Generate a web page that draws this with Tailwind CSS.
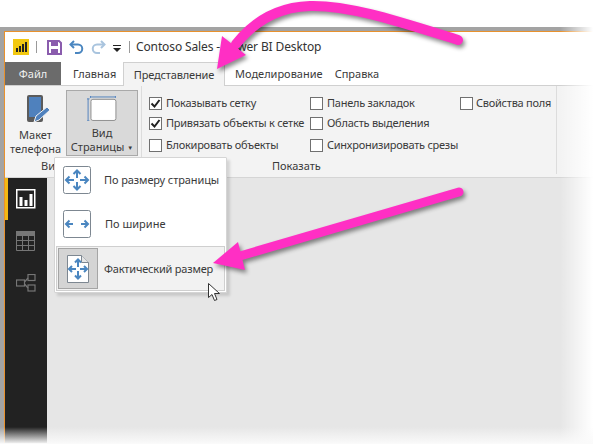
<!DOCTYPE html>
<html><head><meta charset="utf-8"><script src="https://cdn.jsdelivr.net/npm/@tailwindcss/browser@4"></script></head>
<body class="bg-white">
<div class="relative w-[593px] h-[447px] overflow-hidden bg-white font-['Noto_Sans',sans-serif] text-[11px] leading-[14px] text-[#3a3a3a] whitespace-nowrap">
  <div class="pt-[27px]">
    <div class="h-[416px] bg-[#a3a3a3] pl-[4px] pt-[4px]">
      <div class="h-[412px] border-l border-t border-[#e8912d] bg-[#e6e6e6] flex flex-col">
        <!-- title bar -->
        <div class="h-[30px] bg-white flex items-center pl-[8px] shrink-0">
          <svg class="w-[16px] h-[16px]" viewBox="0 0 16 16"><rect width="16" height="16" fill="#f2c811"/><g fill="#222"><rect x="3" y="9" width="2" height="4"/><rect x="6" y="7" width="2" height="6"/><rect x="9" y="5" width="2" height="8"/><rect x="12" y="3" width="2" height="10"/></g></svg>
          <div class="ml-[7px] w-px h-[12px] bg-[#9a9a9a]"></div>
          <svg class="ml-[10px] w-[15px] h-[15px]" viewBox="0 0 15 15"><path d="M1 1h11l2 2v11H1z" fill="#fff" stroke="#8a5cad" stroke-width="2"/><rect x="4" y="1" width="7" height="5" fill="#8a5cad"/><rect x="4" y="9" width="7" height="5" fill="#8a5cad"/></svg>
          <svg class="ml-[7px] w-[15px] h-[14px]" viewBox="0 0 15 14" fill="none" stroke="#4a86c0" stroke-width="2"><path d="M5 1 1.500 4.500 5 8"/><path d="M2 4.500h7a4 4 0 0 1 0 8.500H6"/></svg>
          <svg class="ml-[7px] w-[15px] h-[14px]" viewBox="0 0 15 14" fill="none" stroke="#a9c4de" stroke-width="2"><path d="M10 1l3.500 3.500L10 8"/><path d="M13 4.500H6a4 4 0 0 0 0 8.500h3"/></svg>
          <svg class="ml-[7px] w-[8px] h-[7px] mt-[3px]" viewBox="0 0 8 7"><rect width="8" height="1" fill="#222"/><path d="M0 3h8L4 7z" fill="#222"/></svg>
          <div class="ml-[8px] w-px h-[12px] bg-[#9a9a9a]"></div>
          <span class="ml-[7px] text-[12px] tracking-[-0.12px] text-[#333] -translate-x-px">Contoso Sales - Power BI Desktop</span>
        </div>
        <!-- tabs -->
        <div class="h-[24px] bg-white flex shrink-0 border-b border-[#d0d0d0]">
          <div class="w-[56px] h-[23px] bg-[#6b6b6b] text-[#f0f0f0] flex items-center justify-center">Файл</div>
          <div class="ml-[12px] w-[50px] flex items-center">Главная</div>
          <div class="h-[24px] w-[102px] -mb-px bg-[#f3f3f3] border border-b-0 border-[#d0d0d0] flex items-center justify-center tracking-[-0.15px]">Представление</div>
          <div class="ml-[10px] flex items-center">Моделирование</div>
          <div class="ml-[12px] flex items-center">Справка</div>
        </div>
        <!-- ribbon -->
        <div class="h-[92px] bg-[#f3f3f3] border-b border-[#d5d5d5] flex shrink-0">
          <div class="w-[137px] border-r border-[#dcdcdc] flex flex-col mb-[3px]">
            <div class="flex h-[70px] pt-[4px]">
              <div class="w-[61px] flex flex-col items-center pt-[4px]">
                <svg class="w-[26px] h-[29px] ml-[7px]" viewBox="0 0 26 29"><rect x="1" y="1" width="16" height="27" rx="2" fill="#5b5b5b"/><rect x="3" y="3" width="12" height="20" fill="#4f81bd"/><path d="M8 28l2-6 11-9 3 3-11 10z" fill="#4f81bd" stroke="#f3f3f3"/></svg>
                <div class="text-center leading-[14px] mt-[5px]">Макет<br>телефона</div>
              </div>
              <div class="w-[72px] h-[66px] bg-[#d9d9d9] border border-[#a9a9a9] flex flex-col items-center pt-[5px]">
                <svg class="w-[30px] h-[26px]" viewBox="0 0 30 26"><path d="M3 1h26M3 0v2M29 0v2M.5 3v23M-1 3h3M-1 26h3" stroke="#4f81bd" fill="none"/><rect x="3.500" y="3.500" width="26" height="22" rx="2" fill="#fff" stroke="#8c8c8c"/></svg>
                <div class="text-center leading-[14px] mt-[5px]">Вид<br>Страницы <span class="text-[6px] align-middle">▼</span></div>
              </div>
            </div>
            <div class="mt-auto pl-[36px] pb-[1px]">Вид</div>
          </div>
          <div class="w-[415px] border-r border-[#dcdcdc] mb-[3px] flex flex-col">
            <div class="flex pl-[7px] pt-[10px] tracking-[-0.25px]">
              <div class="w-[161px] flex flex-col">
                <label class="flex items-center gap-[4px] h-[14px]"><span class="w-[13px] h-[13px] border border-[#707070] bg-white flex items-center justify-center"><svg class="w-[11px] h-[11px]" viewBox="0 0 11 11"><path d="M1.500 5.500 4.500 8.500 9.500 2" fill="none" stroke="#222" stroke-width="2"/></svg></span>Показывать сетку</label>
                <label class="flex items-center gap-[4px] h-[14px] mt-[6px]"><span class="w-[13px] h-[13px] border border-[#707070] bg-white flex items-center justify-center"><svg class="w-[11px] h-[11px]" viewBox="0 0 11 11"><path d="M1.500 5.500 4.500 8.500 9.500 2" fill="none" stroke="#222" stroke-width="2"/></svg></span>Привязать объекты к сетке</label>
                <label class="flex items-center gap-[4px] h-[14px] mt-[8px]"><span class="w-[13px] h-[13px] border border-[#707070] bg-white"></span>Блокировать объекты</label>
              </div>
              <div class="w-[150px] flex flex-col">
                <label class="flex items-center gap-[4px] h-[14px]"><span class="w-[13px] h-[13px] border border-[#707070] bg-white"></span>Панель закладок</label>
                <label class="flex items-center gap-[4px] h-[14px] mt-[6px]"><span class="w-[13px] h-[13px] border border-[#707070] bg-white"></span>Область выделения</label>
                <label class="flex items-center gap-[4px] h-[14px] mt-[8px]"><span class="w-[13px] h-[13px] border border-[#707070] bg-white"></span>Синхронизировать срезы</label>
              </div>
              <label class="flex items-center gap-[3px] h-[14px]"><span class="w-[13px] h-[13px] border border-[#707070] bg-white"></span>Свойства поля</label>
            </div>
            <div class="mt-auto pl-[130px] pb-[1px]">Показать</div>
          </div>
        </div>
        <!-- body -->
        <div class="flex-1 flex">
          <div class="w-[42px] bg-[#222222] flex flex-col">
            <div class="h-[42px] border-l-[3px] border-[#f2b811] flex items-center justify-center pr-[3px]">
              <svg class="w-[20px] h-[20px]" viewBox="0 0 20 20"><rect x=".75" y=".75" width="18" height="18" fill="none" stroke="#fff" stroke-width="1.500"/><rect x="3.500" y="8" width="3" height="9" fill="#fff"/><rect x="8.500" y="11" width="3" height="6" fill="#fff"/><rect x="13.500" y="5" width="3" height="12" fill="#fff"/></svg>
            </div>
            <div class="h-[42px] flex items-center justify-center">
              <svg class="w-[20px] h-[20px]" viewBox="0 0 20 20"><rect width="19" height="5" fill="#767676"/><path d="M.5 4.500h18v15H.5zM.5 9.500h18M.5 14.500h18M6.500 4.500v15M12.500 4.500v15" fill="none" stroke="#767676"/></svg>
            </div>
            <div class="h-[42px] flex items-center justify-center">
              <svg class="w-[20px] h-[18px]" viewBox="0 0 20 18" fill="none" stroke="#767676" stroke-width="1.200"><rect x=".5" y="6" width="8" height="6"/><rect x="12" y=".5" width="7" height="6"/><rect x="12" y="11" width="7" height="6"/><path d="M8.500 8l3.500-4M8.500 10l3.500 4"/></svg>
            </div>
          </div>
          <div class="flex-1 bg-[#e6e6e6]"></div>
        </div>
      </div>
    </div>
  </div>

  <!-- dropdown menu -->
  <div class="absolute left-[54px] top-[157px] w-[173px] h-[136px] bg-white border border-[#d5d5d5] rounded-[1px] shadow-[3px_3px_3px_rgba(0,0,0,0.13)] text-[#3a3a3a]">
    <div class="flex items-center h-[44px] pl-[8px]">
      <svg class="w-[28px] h-[28px]" viewBox="0 0 28 28"><rect x=".5" y=".5" width="27" height="27" rx="2" fill="#fff" stroke="#7d8791"/><g fill="none" stroke="#4a86c0" stroke-width="2"><path d="M14 5v7M14 16v7M3 14h8M17 14h8M10.500 8 14 4.500 17.500 8M10.500 20 14 23.500 17.500 20M6.500 10.500 3 14l3.500 3.500M21.500 10.500 25 14l-3.500 3.500"/></g></svg>
      <span class="ml-[13px] tracking-[-0.1px]">По размеру страницы</span>
    </div>
    <div class="flex items-center h-[44px] pl-[8px]">
      <svg class="w-[28px] h-[28px]" viewBox="0 0 28 28"><rect x=".5" y=".5" width="27" height="27" rx="2" fill="#fff" stroke="#7d8791"/><g fill="none" stroke="#4a86c0" stroke-width="2"><path d="M3 14h7M18 14h7M6.500 10.500 3 14l3.500 3.500M21.500 10.500 25 14l-3.500 3.500"/></g></svg>
      <span class="ml-[14px]">По ширине</span>
    </div>
    <div class="mx-px h-[45px] bg-[#f2f2f2] border border-[#cfcfcf] flex items-center pl-px">
      <div class="w-[40px] h-[41px] bg-[#d4d4d4] border border-[#a5a5a5] flex items-center justify-center">
        <svg class="w-[22px] h-[28px]" viewBox="0 0 22 28"><path d="M.5.500h14l7 7v20H.500z" fill="#fff" stroke="#7d8791"/><path d="M14.500.500v7h7" fill="#e6e6e6" stroke="#7d8791"/><g fill="none" stroke="#4a86c0" stroke-width="2"><path d="M11 5v7M11 16v7M2 14h7M13 14h7M8 7.500 11 4.500l3 3M8 20.500l3 3 3-3M5 11l-3 3 3 3M17 11l3 3-3 3"/></g></svg>
      </div>
      <span class="ml-[6px] tracking-[-0.2px]">Фактический размер</span>
    </div>
  </div>

  <!-- right and bottom fade -->
  <div class="absolute right-0 top-[27px] w-[33px] h-[420px] bg-gradient-to-r from-white/0 to-white"></div>
  <div class="absolute left-0 top-[427px] w-[593px] h-[17px] bg-gradient-to-b from-white/0 to-[#fafafa]"></div>
  <div class="absolute left-0 top-[444px] w-[593px] h-[3px] bg-white"></div>

  <!-- arrows -->
  <svg class="absolute left-0 top-0 w-[593px] h-[447px] [filter:drop-shadow(2px_3px_2px_rgba(0,0,0,0.45))]" viewBox="0 0 593 447">
    <path d="M458 40C400 22 350 5 310 6C280 7 255 20 236 44" fill="none" stroke="#ff2fc4" stroke-width="10" stroke-linecap="round"/>
    <path d="M217 69 222 36 246 55z" fill="#ff2fc4"/>
    <path d="M459 192 240 256" fill="none" stroke="#ff2fc4" stroke-width="9" stroke-linecap="round"/>
    <path d="M213 263 238 242 245 270z" fill="#ff2fc4"/>
  </svg>
  <!-- cursor -->
  <svg class="absolute left-[208px] top-[283px] w-[13px] h-[19px]" viewBox="0 0 13 19"><path d="M.5.500v14l3.500-3 2.500 6 2.500-1-2.500-6h5z" fill="#fff" stroke="#333"/></svg>
</div>
</body></html>
